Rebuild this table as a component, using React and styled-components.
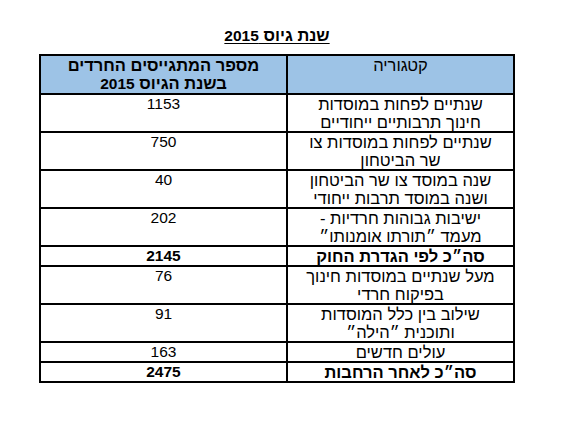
import React from 'react';
import styled, { createGlobalStyle } from 'styled-components';

const GlobalStyle = createGlobalStyle`
  html, body {
    margin: 0;
    padding: 0;
    background: #fff;
  }
  body {
    font-family: "Liberation Sans", Arial, sans-serif;
    color: #000;
  }
`;

const Page = styled.div`
  width: 574px;
  height: 426px;
  padding: 26px 0 0 50px;
  box-sizing: border-box;
`;

const Sheet = styled.div`
  width: 454px;
  display: flex;
  flex-direction: column;
  align-items: center;
`;

const Title = styled.h1`
  margin: 0 0 9px;
  font-size: 16.5px;
  line-height: 19px;
  font-weight: bold;
  text-decoration: underline;
  text-decoration-thickness: 1px;
  text-underline-offset: 2px;
`;

// Latin digits are set a little smaller than the Hebrew text around them
const Num = styled.span`
  font-size: 15.5px;
`;

const Table = styled.table`
  width: 454px;
  border-collapse: collapse;
  table-layout: fixed;
  font-size: 16.5px;
  line-height: 18px;
`;

const HeadCell = styled.th`
  background: #9dc3e6;
  border: 2px solid #000;
  padding: 0 4px;
  text-align: center;
  vertical-align: top;
  font-weight: ${(p) => (p.$bold ? 'bold' : 'normal')};
  width: ${(p) => p.$width}px;
`;

const Cell = styled.td`
  border: 2px solid #000;
  padding: 0 4px;
  text-align: center;
  vertical-align: top;
  font-weight: ${(p) => (p.$bold ? 'bold' : 'normal')};
  font-size: ${(p) => (p.$num ? '15.5px' : 'inherit')};
  line-height: ${(p) => (p.$num ? '17px' : 'inherit')};
`;

const rows = [
  { label: ['שנתיים לפחות במוסדות', 'חינוך תרבותיים ייחודיים'], value: '1153' },
  { label: ['שנתיים לפחות במוסדות צו', 'שר הביטחון'], value: '750' },
  { label: ['שנה במוסד צו שר הביטחון', 'ושנה במוסד תרבות ייחודי'], value: '40' },
  { label: ['ישיבות גבוהות חרדיות -', 'מעמד ״תורתו אומנותו״'], value: '202' },
  { label: ['סה״כ לפי הגדרת החוק'], value: '2145', bold: true },
  { label: ['מעל שנתיים במוסדות חינוך', 'בפיקוח חרדי'], value: '76' },
  { label: ['שילוב בין כלל המוסדות', 'ותוכנית ״הילה״'], value: '91' },
  { label: ['עולים חדשים'], value: '163' },
  { label: ['סה״כ לאחר הרחבות'], value: '2475', bold: true },
];

const multiline = (lines) =>
  lines.map((line, j) => (
    <React.Fragment key={j}>
      {j > 0 && <br />}
      {line}
    </React.Fragment>
  ));

export default function App() {
  return (
    <>
      <GlobalStyle />
      <Page>
        <Sheet dir="rtl">
          <Title>
            שנת גיוס <Num>2015</Num>
          </Title>
          <Table>
            <thead>
              <tr>
                <HeadCell $width={217}>קטגוריה</HeadCell>
                <HeadCell $width={237} $bold>
                  מספר המתגייסים החרדים
                  <br />
                  בשנת הגיוס <Num>2015</Num>
                </HeadCell>
              </tr>
            </thead>
            <tbody>
              {rows.map((row, i) => (
                <tr key={i}>
                  <Cell $bold={row.bold}>{multiline(row.label)}</Cell>
                  <Cell $bold={row.bold} $num>
                    {row.value}
                  </Cell>
                </tr>
              ))}
            </tbody>
          </Table>
        </Sheet>
      </Page>
    </>
  );
}
